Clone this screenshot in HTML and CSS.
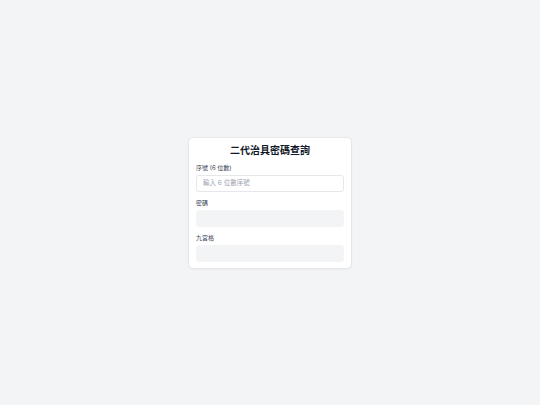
FILE: index.html
```html
<!DOCTYPE html>
<html lang="zh-Hant">
<head>
<meta charset="utf-8">
<link rel="stylesheet" href="styles.css">
</head>
<body>
<main class="page">
  <div class="card">
    <h1 class="title">二代治具密碼查詢</h1>
    <div class="field">
      <label class="label">序號 (6 位數)</label>
      <input class="input" type="text" placeholder="輸入 6 位數序號">
    </div>
    <div class="field">
      <label class="label">密碼</label>
      <input class="input readonly" type="text" readonly>
    </div>
    <div class="field">
      <label class="label">九宮格</label>
      <input class="input readonly" type="text" readonly>
    </div>
  </div>
</main>
</body>
</html>
```
FILE: styles.css
```css
html, body {
  margin: 0;
  padding: 0;
  height: 100%;
}
body {
  background: #f3f4f6;
  font-family: "Inter", "Noto Sans CJK TC", sans-serif;
  color: #111827;
}
.page {
  height: 100%;
  display: flex;
  align-items: center;
  justify-content: center;
}
.card {
  width: 164px;
  box-sizing: border-box;
  background: #ffffff;
  border: 1px solid #e5e7eb;
  border-radius: 5px;
  padding: 5px 7px 6px;
  display: flex;
  flex-direction: column;
  gap: 7px;
  box-shadow: 0 1px 2px rgba(0,0,0,0.04);
}
.title {
  margin: 0;
  font-size: 10px;
  line-height: 14px;
  font-weight: 700;
  text-align: center;
  color: #111827;
}
.field {
  display: flex;
  flex-direction: column;
  gap: 3px;
}
.label {
  font-size: 6px;
  line-height: 8px;
  color: #374151;
}
.input {
  height: 17px;
  box-sizing: border-box;
  border: 1px solid #e5e7eb;
  border-radius: 3px;
  background: #ffffff;
  padding: 0 6px;
  font-family: inherit;
  font-size: 6.5px;
  color: #111827;
  outline: none;
}
.input::placeholder {
  color: #9ca3af;
}
.input.readonly {
  background: #f3f4f6;
  border-color: #f3f4f6;
}
```
